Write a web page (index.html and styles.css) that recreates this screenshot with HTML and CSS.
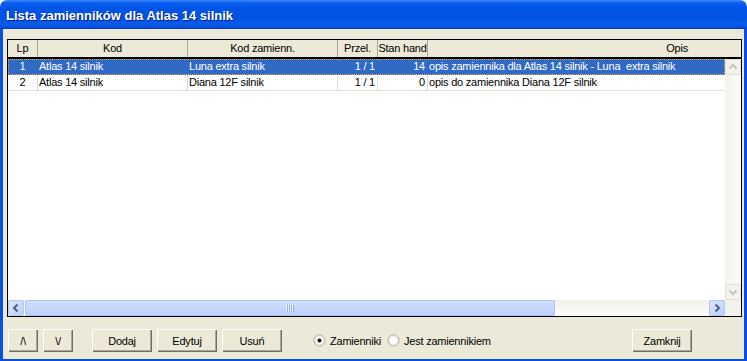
FILE: index.html
```html
<!DOCTYPE html>
<html lang="pl">
<head>
    <meta charset="UTF-8">
    <title>Lista zamienników</title>
    <link rel="stylesheet" href="styles.css">
</head>
<body>
    <div id="dialog">
        <div id="caption">Lista zamienników dla Atlas 14 silnik</div>

        <div id="client">
            <div class="grid">
                <div class="grid-head">
                    <div class="hcell c-lp">Lp</div>
                    <div class="hcell c-kod">Kod</div>
                    <div class="hcell c-kodz">Kod zamienn.</div>
                    <div class="hcell c-przel">Przel.</div>
                    <div class="hcell c-stan">Stan hand</div>
                    <div class="hcell c-opis">Opis</div>
                </div>

                <div class="grid-main">
                    <div class="rows">
                        <div class="row selected">
                            <div class="cell c-lp center">1</div>
                            <div class="cell c-kod">Atlas 14 silnik</div>
                            <div class="cell c-kodz">Luna extra silnik</div>
                            <div class="cell c-przel right">1 / 1</div>
                            <div class="cell c-stan right">14</div>
                            <div class="cell c-opis">opis zamiennika dla Atlas 14 silnik - Luna  extra silnik</div>
                        </div>
                        <div class="row">
                            <div class="cell c-lp center">2</div>
                            <div class="cell c-kod">Atlas 14 silnik</div>
                            <div class="cell c-kodz">Diana 12F silnik</div>
                            <div class="cell c-przel right">1 / 1</div>
                            <div class="cell c-stan right">0</div>
                            <div class="cell c-opis">opis do zamiennika Diana 12F silnik</div>
                        </div>
                    </div>

                    <div class="vscroll">
                        <div class="sbtn off">
                            <svg width="14" height="14" viewBox="0 0 14 14"><path d="M3.5 8.5 L7 5 L10.5 8.5" stroke="#c6c4b6" stroke-width="2" fill="none"/></svg>
                        </div>
                        <div class="vtrack"></div>
                        <div class="sbtn off">
                            <svg width="14" height="14" viewBox="0 0 14 14"><path d="M3.5 5.5 L7 9 L10.5 5.5" stroke="#c6c4b6" stroke-width="2" fill="none"/></svg>
                        </div>
                    </div>
                </div>

                <div class="grid-foot">
                    <div class="hscroll">
                        <div class="sbtn on">
                            <svg width="14" height="14" viewBox="0 0 14 14"><path d="M8.5 3.5 L5 7 L8.5 10.5" stroke="#4d6185" stroke-width="2" fill="none"/></svg>
                        </div>
                        <div class="htrack">
                            <div class="thumb" style="width: 530px"><span class="grip"></span></div>
                        </div>
                        <div class="sbtn on">
                            <svg width="14" height="14" viewBox="0 0 14 14"><path d="M5.5 3.5 L9 7 L5.5 10.5" stroke="#4d6185" stroke-width="2" fill="none"/></svg>
                        </div>
                    </div>
                    <div class="corner"></div>
                </div>
            </div>

            <div class="toolbar">
                <button type="button" class="btn small">/\</button>
                <button type="button" class="btn small second">\/</button>
                <button type="button" class="btn wide first">Dodaj</button>
                <button type="button" class="btn wide">Edytuj</button>
                <button type="button" class="btn wide">Usuń</button>

                <div class="radios">
                    <label class="radio">
                        <svg width="13" height="13" viewBox="0 0 13 13">
                            <circle cx="6.5" cy="6.5" r="5.5" fill="#fff" stroke="#a9a79a"/>
                            <circle cx="6.5" cy="6.5" r="4.5" fill="none" stroke="#e4e2d8"/>
                            <circle cx="6.5" cy="6.5" r="2" fill="#000"/>
                        </svg>
                        Zamienniki
                    </label>
                    <label class="radio">
                        <svg width="13" height="13" viewBox="0 0 13 13">
                            <circle cx="6.5" cy="6.5" r="5.5" fill="#fff" stroke="#a9a79a"/>
                            <circle cx="6.5" cy="6.5" r="4.5" fill="none" stroke="#e4e2d8"/>
                        </svg>
                        Jest zamiennikiem
                    </label>
                </div>

                <button type="button" class="btn wide close">Zamknij</button>
            </div>
        </div>
    </div>
</body>
</html>
```

FILE: styles.css
```css
html, body {
    margin: 0;
    padding: 0;
    background: #fff;
}

body {
    font-family: 'Liberation Sans', Arial, sans-serif;
    font-size: 11px;
    letter-spacing: -0.22px;
    color: #000;
}

#dialog {
    width: 747px;
    height: 361px;
    display: flex;
    flex-direction: column;
    border-radius: 7px 7px 0 0;
    overflow: hidden;
}

#caption {
    height: 27px;
    padding: 2px 0 0 6px;
    line-height: 27px;
    font-size: 13px;
    font-weight: bold;
    letter-spacing: 0;
    color: #fff;
    text-shadow: 1px 1px #0a1e8c;
    background: linear-gradient(#3a8bf8 0, #0a5df0 3px, #0055e6 8px, #0052e2 18px, #0a5ce8 24px, #0650df 27px, #003cc8 29px);
}

#client {
    flex: 1;
    display: flex;
    flex-direction: column;
    background-color: #ece9d8;
    border: 3px solid #0850e0;
    border-top: none;
    padding: 10px 2px 7px 4px;
}

/* list view */

.grid {
    height: 276px;
    border: 1px solid #000;
    display: flex;
    flex-direction: column;
    background-color: #fff;
}

.grid-head {
    display: flex;
    height: 17px;
    line-height: 17px;
    background-color: #ece9d8;
    border-bottom: 2px solid #000;
}

.hcell {
    box-sizing: border-box;
    border-right: 1px solid #aca899;
    text-align: center;
    white-space: nowrap;
    overflow: hidden;
}

.c-lp { width: 30px; }
.c-kod { width: 150px; }
.c-kodz { width: 150px; }
.c-przel { width: 40px; }
.c-stan { width: 50px; }
.c-opis { flex: 1; }

.hcell.c-opis {
    border-right: none;
    text-align: right;
    padding-right: 53px;
}

.grid-main {
    flex: 1;
    display: flex;
    min-height: 0;
}

.rows {
    flex: 1;
    overflow: hidden;
}

.row {
    display: flex;
    height: 15px;
    line-height: 15px;
    border-bottom: 1px solid #e3e2dc;
}

.cell {
    box-sizing: border-box;
    border-right: 1px solid #dcdbd4;
    padding: 0 1px 0 1px;
    white-space: pre;
    overflow: hidden;
}

.cell.c-opis {
    border-right: none;
}

.center { text-align: center; }
.right { text-align: right; padding-right: 2px; }

.row.selected {
    background-color: #316ac5;
    color: #fff;
    outline: 1px dotted #e2a946;
    outline-offset: -1px;
    border-bottom-color: #316ac5;
}

.row.selected .cell {
    border-right-color: #316ac5;
}

/* scroll bars */

.vscroll {
    width: 16px;
    display: flex;
    flex-direction: column;
    background: linear-gradient(90deg, #f3f1ea, #fdfdfa);
}

.vtrack {
    flex: 1;
}

.sbtn {
    width: 16px;
    height: 16px;
    box-sizing: border-box;
    border-radius: 2px;
    display: flex;
    align-items: center;
    justify-content: center;
}

.sbtn.off {
    background: #f3f2ec;
    border: 1px solid #e3e1d6;
}

.sbtn.on {
    background: linear-gradient(135deg, #dbe5fe, #bccffb);
    border: 1px solid #b3c6f4;
}

.grid-foot {
    display: flex;
    height: 16px;
}

.hscroll {
    flex: 1;
    display: flex;
    background: linear-gradient(#f2f0e9, #fdfdfa);
}

.htrack {
    flex: 1;
    display: flex;
    padding-left: 1px;
}

.thumb {
    box-sizing: border-box;
    height: 16px;
    border: 1px solid #aec3f4;
    border-radius: 2px;
    background: linear-gradient(#d2defd, #bcd0fb);
    display: flex;
    align-items: center;
    justify-content: center;
}

.grip {
    width: 8px;
    height: 7px;
    background: repeating-linear-gradient(90deg, #eef3fe 0 1px, #8db1f6 1px 2px);
}

.corner {
    width: 16px;
    background-color: #f2f1eb;
}

/* bottom buttons */

.toolbar {
    display: flex;
    align-items: center;
    margin-top: 12px;
    height: 23px;
}

.btn {
    height: 23px;
    padding: 0;
    border: none;
    background-color: #ece9d8;
    font-family: inherit;
    font-size: 11px;
    letter-spacing: -0.22px;
    color: #000;
    box-shadow: inset 1px 1px #fff, inset -1px -1px #716f64, inset -2px -2px #aca899;
}

.btn.small {
    width: 30px;
    margin-left: 1px;
}

.btn.small.second {
    margin-left: 5px;
}

.btn.wide {
    width: 60px;
    margin-left: 5px;
}

.btn.wide.first {
    margin-left: 19px;
}

.radios {
    display: flex;
    align-items: center;
    margin-left: 31px;
    gap: 6px;
}

.radio {
    display: flex;
    align-items: center;
    gap: 4px;
}

.btn.close {
    margin-left: auto;
    margin-right: 50px;
}
```
